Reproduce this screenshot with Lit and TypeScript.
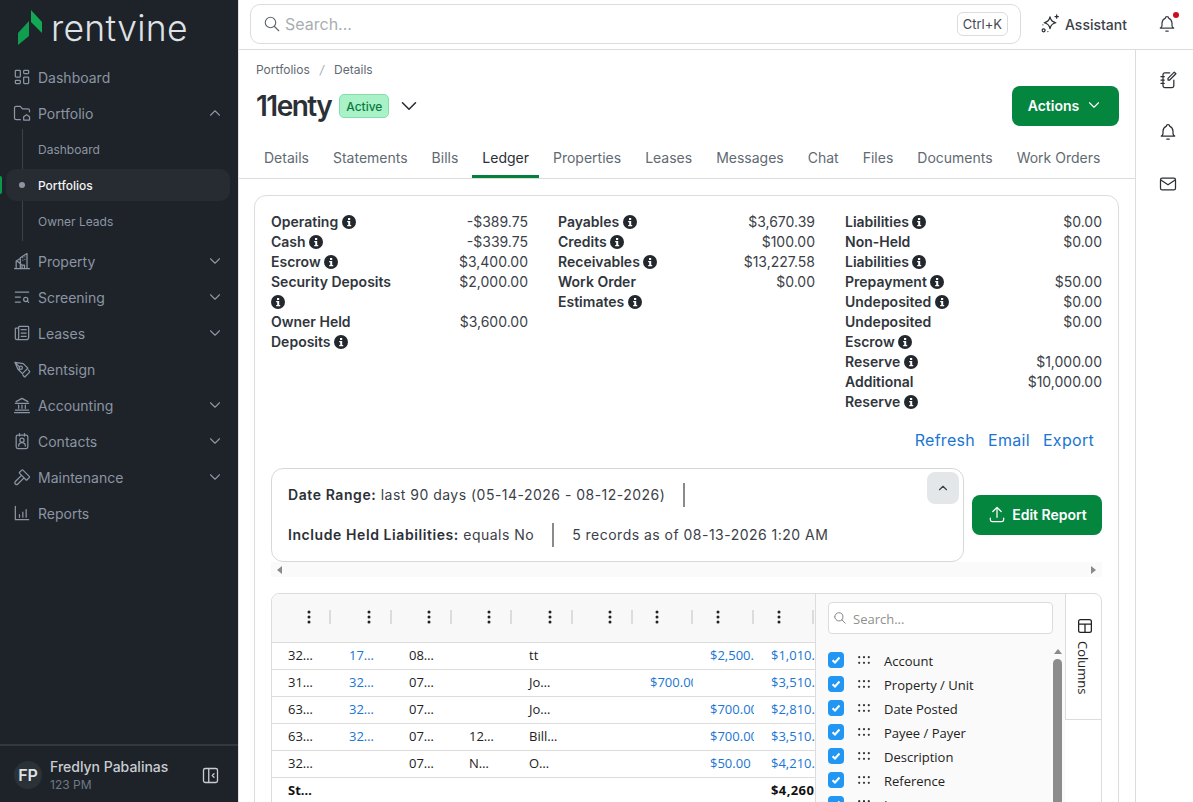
import { LitElement, html, css } from "lit";
import { customElement } from "lit/decorators.js";

const ICONS: Record<string, string> = {
  dashboard:
    "M5 4h4a1 1 0 0 1 1 1v6a1 1 0 0 1-1 1H5a1 1 0 0 1-1-1V5a1 1 0 0 1 1-1M5 16h4a1 1 0 0 1 1 1v2a1 1 0 0 1-1 1H5a1 1 0 0 1-1-1v-2a1 1 0 0 1 1-1M15 12h4a1 1 0 0 1 1 1v6a1 1 0 0 1-1 1h-4a1 1 0 0 1-1-1v-6a1 1 0 0 1 1-1M15 4h4a1 1 0 0 1 1 1v2a1 1 0 0 1-1 1h-4a1 1 0 0 1-1-1V5a1 1 0 0 1 1-1",
  portfolio:
    "M10 20H5a2 2 0 0 1-2-2V6a2 2 0 0 1 2-2h5l2.5 3H19a2 2 0 0 1 2 2v1.5M14 20.5v-4l3.5-2.5 3.5 2.5v4z",
  property:
    "M3 21h18M5 21v-9l5-3v12M10 8l8-5v18M13 8v.01M13 11v.01M15.5 7v.01M15.5 10v.01M6 12l5 4M12 21v-4h3v4",
  screening: "M4 6h16M4 12h6M4 18h6M14 15a2.5 2.5 0 1 0 5 0a2.5 2.5 0 1 0-5 0M18.5 17l1.5 1.5",
  leases:
    "M8 6H5a1 1 0 0 0-1 1v11a2 2 0 0 0 4 0V5a1 1 0 0 1 1-1h10a1 1 0 0 1 1 1v12a3 3 0 0 1-3 3H6M11 8h6M11 12h6M11 16h6",
  rentsign:
    "M3.500 4l10 1.500 5.500 5.500-6.500 6.500-5.500-5.500zM3.500 4l5.700 5.700M8.500 10.500a2 2 0 1 0 4 0a2 2 0 1 0-4 0M13 19l1.500 2a1 1 0 0 0 1.400 0l5-5a1 1 0 0 0 0-1.400l-1.500-1.500",
  accounting: "M3 21h18M4 18h16M4 10h16M5 8l7-4 7 4M8 12v4M12 12v4M16 12v4",
  contacts:
    "M7 5h10a2 2 0 0 1 2 2v12a2 2 0 0 1-2 2H7a2 2 0 0 1-2-2V7a2 2 0 0 1 2-2M9 3v3M15 3v3M9.500 11a2.500 2.500 0 1 0 5 0a2.500 2.500 0 1 0-5 0M8 18a4 4 0 0 1 8 0",
  maintenance:
    "M11.414 10l-7.383 7.418a2.091 2.091 0 0 0 0 2.967 2.11 2.11 0 0 0 2.976 0l7.407-7.385M18.121 15.293l2.586-2.586a1 1 0 0 0 0-1.414l-7.586-7.586a1 1 0 0 0-1.414 0L9.121 6.293a1 1 0 0 0 0 1.414l7.586 7.586a1 1 0 0 0 1.414 0z",
  reports: "M4 4v16h16M9 17v-3M13 17v-6M17 17V8",
  down: "M6 9l6 6 6-6",
  up: "M6 15l6-6 6 6",
  search: "M3 10a7 7 0 1 0 14 0a7 7 0 1 0-14 0M21 21l-6-6",
  bell: "M10 5a2 2 0 1 1 4 0 7 7 0 0 1 4 6v3a4 4 0 0 0 2 3H4a4 4 0 0 0 2-3v-3a7 7 0 0 1 4-6M10.500 20.500h3",
  mail: "M5 5h14a2 2 0 0 1 2 2v10a2 2 0 0 1-2 2H5a2 2 0 0 1-2-2V7a2 2 0 0 1 2-2M3 7l9 6 9-6",
  notes:
    "M14 3.500H8a2 2 0 0 0-2 2V19a2 2 0 0 0 2 2h9a2 2 0 0 0 2-2v-7M3.500 8h4M3.500 12h4M3.500 16h4M19.500 2.500l2 2-7.500 7.500h-2v-2z",
  sparkle:
    "M12 3.500c.7 4 2.500 6 7 7-4.500 1-6.300 3-7 7-.7-4-2.500-6-7-7 4.500-1 6.300-3 7-7zM20 1v4M18 3h4M2.500 19.500a1.800 1.800 0 1 0 3.600 0a1.800 1.800 0 1 0-3.600 0M9.500 21v.01M3.500 13v.01",
  upload: "M4 17v2a2 2 0 0 0 2 2h12a2 2 0 0 0 2-2v-2M7 9l5-5 5 5M12 4v12",
  collapse: "M6 4h12a2 2 0 0 1 2 2v12a2 2 0 0 1-2 2H6a2 2 0 0 1-2-2V6a2 2 0 0 1 2-2M10 4v16M16 10l-2 2 2 2",
  table: "M6 3.500h12a2.500 2.500 0 0 1 2.500 2.500v12a2.500 2.500 0 0 1-2.500 2.500H6A2.500 2.500 0 0 1 3.500 18V6A2.500 2.500 0 0 1 6 3.500M3.500 9.500h17M12 9.500v11",
};

const icon = (name: string) =>
  html`<svg class="i" viewBox="0 0 24 24"><path d=${ICONS[name]}></path></svg>`;

const info = html`<svg class="info" viewBox="0 0 14 14">
  <circle cx="7" cy="7" r="7"></circle>
  <rect x="6" y="3" width="2.200" height="2"></rect>
  <path d="M5.200 6h3v4h1v1.300H5.200V10h1V7.300h-1z"></path>
</svg>`;

const NAV_TOP = [
  { label: "Dashboard", icon: "dashboard" },
  { label: "Portfolio", icon: "portfolio", chevron: "up" },
];
const NAV_REST = [
  { label: "Property", icon: "property", chevron: "down" },
  { label: "Screening", icon: "screening", chevron: "down" },
  { label: "Leases", icon: "leases", chevron: "down" },
  { label: "Rentsign", icon: "rentsign" },
  { label: "Accounting", icon: "accounting", chevron: "down" },
  { label: "Contacts", icon: "contacts", chevron: "down" },
  { label: "Maintenance", icon: "maintenance", chevron: "down" },
  { label: "Reports", icon: "reports" },
];
const TABS = ["Details", "Statements", "Bills", "Ledger", "Properties", "Leases", "Messages", "Chat", "Files", "Documents", "Work Orders"];

const SUMMARY = [
  [
    ["Operating", "-$389.75"],
    ["Cash", "-$339.75"],
    ["Escrow", "$3,400.00"],
    ["Security Deposits", "$2,000.00"],
    ["Owner Held Deposits", "$3,600.00"],
  ],
  [
    ["Payables", "$3,670.39"],
    ["Credits", "$100.00"],
    ["Receivables", "$13,227.58"],
    ["Work Order Estimates", "$0.00"],
  ],
  [
    ["Liabilities", "$0.00"],
    ["Non-Held Liabilities", "$0.00"],
    ["Prepayment", "$50.00"],
    ["Undeposited", "$0.00"],
    ["Undeposited Escrow", "$0.00"],
    ["Reserve", "$1,000.00"],
    ["Additional Reserve", "$10,000.00"],
  ],
];

// account, property, date, ref, description, -, charge, payment, balance
const ROWS = [
  ["32…", "17…", "08…", "", "tt", "", "", "$2,500.00", "$1,010.00"],
  ["31…", "32…", "07…", "", "Jo…", "", "$700.00", "", "$3,510.00"],
  ["63…", "32…", "07…", "", "Jo…", "", "", "$700.00", "$2,810.00"],
  ["63…", "32…", "07…", "12…", "Bill…", "", "", "$700.00", "$3,510.00"],
  ["32…", "", "07…", "N…", "O…", "", "", "$50.00", "$4,210.00"],
];
const COLUMNS = ["Account", "Property / Unit", "Date Posted", "Payee / Payer", "Description", "Reference", "Lease"];

@customElement("app-root")
export class AppRoot extends LitElement {
  static styles = css`
    :host {
      display: flex;
      height: 100vh;
      overflow: hidden;
      background: #fff;
      color: #2b3036;
      font-family: Inter, "Liberation Sans", sans-serif;
      font-size: 14px;
    }
    .i {
      width: 20px;
      height: 20px;
      flex: none;
      fill: none;
      stroke: currentColor;
      stroke-width: 1.5;
      stroke-linecap: round;
      stroke-linejoin: round;
    }
    .info {
      width: 14px;
      height: 14px;
      vertical-align: -2px;
      fill: #23282e;
    }
    .info rect,
    .info path {
      fill: #fff;
    }

    /* sidebar */
    .side {
      width: 238px;
      flex: none;
      background: #1e2329;
      color: #8b95a3;
      display: flex;
      flex-direction: column;
      border-right: 1px solid #e2e2e2;
    }
    .logo {
      height: 59px;
      flex: none;
      display: flex;
      align-items: flex-start;
      padding: 10px 0 0 18px;
      box-sizing: border-box;
      gap: 8px;
    }
    .logo svg {
      width: 25px;
      height: 36px;
      flex: none;
    }
    .logo span {
      color: #dfe2e5;
      font-size: 35.500px;
      font-weight: 300;
      line-height: 38px;
      letter-spacing: 0.3px;
    }
    .item {
      height: 36px;
      display: flex;
      align-items: center;
      gap: 6px;
      padding: 0 14px 0 12px;
    }
    .item .label {
      flex: 1;
    }
    .item .chev {
      width: 18px;
      height: 18px;
    }
    .sub {
      position: relative;
      margin-bottom: 4px;
      font-size: 12px;
    }
    .sub::before {
      content: "";
      position: absolute;
      left: 22px;
      top: -2px;
      bottom: -2px;
      width: 1px;
      background: #3c4248;
    }
    .sub div {
      height: 36px;
      display: flex;
      align-items: center;
      padding-left: 38px;
      position: relative;
    }
    .sub .active {
      color: #f2f4f5;
      font-weight: 500;
    }
    .sub .active::before {
      content: "";
      position: absolute;
      left: 6px;
      right: 8px;
      top: 2px;
      bottom: 2px;
      background: #272c32;
      border-radius: 10px;
    }
    .sub .active span {
      position: relative;
    }
    .sub .active::after {
      content: "";
      position: absolute;
      left: 19px;
      top: 15px;
      width: 6px;
      height: 6px;
      border-radius: 50%;
      background: #8b95a3;
    }
    .sub .bar {
      position: absolute;
      left: 0;
      top: 45px;
      width: 2px;
      height: 18px;
      padding: 0;
      background: #0b9a4a;
      border-radius: 0 2px 2px 0;
    }
    .foot {
      margin-top: auto;
      height: 58px;
      box-sizing: border-box;
      border-top: 2px solid #33383e;
      display: flex;
      align-items: center;
      gap: 8px;
      padding: 2px 17px 0 14px;
    }
    .avatar {
      width: 28px;
      height: 28px;
      border-radius: 50%;
      background: #2a3238;
      color: #dfe2e5;
      font-size: 16px;
      font-weight: 600;
      display: flex;
      align-items: center;
      justify-content: center;
    }
    .who {
      flex: 1;
      line-height: 18px;
      margin-top: 1px;
    }
    .who b {
      display: block;
      color: #c9cdd2;
      font-size: 14px;
      font-weight: 500;
    }
    .who small {
      display: block;
      color: #6f7985;
      font-size: 12px;
    }
    .foot .i {
      width: 21px;
      height: 21px;
      color: #c9cdd2;
    }

    /* top bar */
    .right {
      flex: 1;
      min-width: 0;
      display: flex;
      flex-direction: column;
    }
    .top {
      height: 50px;
      box-sizing: border-box;
      flex: none;
      border-bottom: 1px solid #dcdcdc;
      display: flex;
      align-items: center;
      padding: 0 0 1px 11px;
    }
    .search {
      width: 771px;
      height: 40px;
      box-sizing: border-box;
      border: 1px solid #dcdcdc;
      border-radius: 10px;
      display: flex;
      align-items: center;
      gap: 4px;
      padding: 0 12px;
      color: #a9adb2;
      font-size: 16px;
    }
    .search .i {
      width: 18px;
      height: 18px;
      color: #5d646b;
    }
    .search span {
      flex: 1;
    }
    .search kbd {
      font-family: inherit;
      font-size: 13px;
      color: #444b52;
      border: 1px solid #dcdcdc;
      border-radius: 6px;
      height: 24px;
      box-sizing: border-box;
      padding: 0 5px;
      display: flex;
      align-items: center;
    }
    .assist {
      display: flex;
      align-items: center;
      gap: 5px;
      margin-left: 19px;
      color: #3b4148;
      font-weight: 500;
    }
    .assist .i {
      color: #2b3036;
    }
    .bell {
      position: relative;
      margin-left: 30px;
      width: 20px;
      height: 20px;
      color: #3b4148;
    }
    .bell::after {
      content: "";
      position: absolute;
      right: -2px;
      top: -2px;
      width: 6px;
      height: 6px;
      border-radius: 50%;
      background: #c8101e;
    }

    .below {
      flex: 1;
      min-height: 0;
      display: flex;
    }
    .content {
      flex: 1;
      min-width: 0;
      overflow: hidden;
    }
    .rail {
      width: 58px;
      flex: none;
      box-sizing: border-box;
      border-left: 1px solid #dcdcdc;
      display: flex;
      flex-direction: column;
      align-items: center;
      gap: 32px;
      padding: 20px 0 0 7px;
      color: #2b3036;
    }

    /* page header */
    .head {
      padding: 12px 16px 0 17px;
    }
    .crumbs {
      font-size: 12px;
      line-height: 16px;
      color: #5f6a72;
      display: flex;
      gap: 10px;
    }
    .crumbs i {
      color: #a3a8ad;
    }
    .title {
      margin-top: 8px;
      display: flex;
      align-items: center;
      height: 40px;
    }
    .title h1 {
      margin: 0;
      font-size: 28px;
      font-weight: 600;
      letter-spacing: -1.500px;
      color: #2b3036;
    }
    .badge {
      margin-left: 8px;
      height: 24px;
      width: 50px;
      box-sizing: border-box;
      background: #a9f2c8;
      border: 1px solid #84dfaa;
      border-radius: 5px;
      color: #0b7a3e;
      font-size: 12px;
      font-weight: 500;
      display: flex;
      align-items: center;
      justify-content: center;
    }
    .caret {
      width: 26px;
      height: 26px;
      margin-left: 7px;
      color: #2b3036;
    }
    .caret .i {
      width: 26px;
      height: 26px;
    }
    .btn {
      background: #05863f;
      color: #fff;
      height: 40px;
      box-sizing: border-box;
      padding-bottom: 2px;
      border-radius: 8px;
      font-weight: 600;
      display: flex;
      align-items: center;
      justify-content: center;
    }
    .actions {
      margin-left: auto;
      width: 107px;
      gap: 6px;
    }
    .actions .i {
      width: 18px;
      height: 18px;
    }
    .tabs {
      margin-top: 13px;
      height: 40px;
      box-sizing: border-box;
      border-bottom: 1px solid #dcdcdc;
      display: flex;
      gap: 4px;
      padding-left: 15px;
      color: #5f6a72;
    }
    .tabs div {
      padding: 0 10px;
      line-height: 38px;
      height: 39px;
      box-sizing: border-box;
    }
    .tabs .on {
      color: #2b3036;
      border-bottom: 3px solid #05803c;
    }

    /* card */
    .card {
      margin: 16px 16px 0 15px;
      border: 1px solid #dcdcdc;
      border-radius: 12px;
      padding: 16px;
    }
    .summary {
      display: grid;
      grid-template-columns: repeat(3, 257px);
      gap: 30px;
      line-height: 20px;
    }
    .pair {
      display: grid;
      grid-template-columns: 1fr 1fr;
    }
    .pair b {
      font-weight: 600;
      color: #30363c;
      padding-right: 4px;
    }
    .pair span {
      text-align: right;
      color: #3b4148;
    }
    .links {
      margin-top: 16px;
      height: 24px;
      display: flex;
      justify-content: flex-end;
      gap: 13px;
      padding-right: 8px;
      font-size: 16px;
      line-height: 24px;
      color: #1976d2;
      letter-spacing: 0.3px;
    }
    .filter-row {
      margin-top: 16px;
      display: flex;
      align-items: center;
      gap: 8px;
    }
    .filter {
      position: relative;
      width: 693px;
      height: 94px;
      box-sizing: border-box;
      border: 1px solid #d8d8d8;
      border-radius: 12px;
      padding: 14px 16px;
      display: flex;
      flex-direction: column;
      gap: 16px;
      letter-spacing: 0.48px;
      color: #3b4148;
    }
    .filter > div:not(.toggle) {
      height: 24px;
      display: flex;
      align-items: center;
      gap: 18px;
    }
    .filter span {
      margin-top: -2px;
    }
    .filter b {
      font-weight: 600;
      color: #2b3036;
      letter-spacing: 0.58px;
    }
    .sep {
      width: 2px;
      height: 24px;
      background: #8a8a8a;
    }
    .toggle {
      position: absolute;
      top: 3px;
      right: 4px;
      width: 32px;
      height: 32px;
      background: #e4e7e9;
      border-radius: 8px;
      display: flex;
      align-items: center;
      justify-content: center;
    }
    .toggle .i {
      width: 14px;
      height: 14px;
      stroke-width: 2;
    }
    .edit {
      width: 130px;
      gap: 5px;
    }
    .hscroll {
      height: 15px;
      background: #fafafa;
      display: flex;
      align-items: center;
      justify-content: space-between;
      padding: 0 6px;
    }
    .tri-l,
    .tri-r {
      width: 0;
      height: 0;
      border-top: 4px solid transparent;
      border-bottom: 4px solid transparent;
    }
    .tri-l {
      border-right: 5px solid #8a8a8a;
    }
    .tri-r {
      border-left: 5px solid #8a8a8a;
    }

    /* grid */
    .grid {
      margin-top: 16px;
      height: 300px;
      border: 1px solid #dcdcdc;
      border-radius: 8px 8px 0 0;
      display: flex;
      overflow: hidden;
      font-family: "Open Sans", "Liberation Sans", sans-serif;
      font-size: 13px;
      color: #222;
    }
    .table {
      width: 543px;
      flex: none;
      overflow: hidden;
    }
    .hrow,
    .row {
      display: grid;
      grid-template-columns: 59px 61px 60px 60px 61px 60px 60px 61px 61px;
    }
    .hrow {
      height: 49px;
      background: #f8f8f8;
      border-bottom: 1px solid #dcdcdc;
      box-sizing: border-box;
    }
    .hcell {
      position: relative;
      display: flex;
      align-items: flex-start;
      justify-content: flex-end;
      padding: 16px 21px 0 0;
    }
    .hcell:first-child {
      padding-right: 20px;
    }
    .hcell.mid {
      padding-right: 34px;
    }
    .hcell::after {
      content: "";
      position: absolute;
      right: 0;
      top: 16px;
      width: 2px;
      height: 14px;
      background: #dcdcdc;
    }
    .hcell:last-child::after {
      right: 1px;
    }
    .hcell svg {
      width: 4px;
      height: 14px;
      fill: #222;
    }
    .row {
      height: 27px;
      box-sizing: border-box;
      border-bottom: 1px solid #dcdcdc;
      line-height: 25px;
    }
    .row div {
      overflow: hidden;
      white-space: nowrap;
      padding-left: 17px;
    }
    .row div:first-child {
      padding-left: 16px;
    }
    .row div:nth-child(2) {
      padding-left: 18px;
    }
    .row .link {
      color: #1976d2;
    }
    .row.total {
      font-weight: 700;
      border: 0;
      color: #111;
    }
    .row.total div:last-child {
      letter-spacing: 0.4px;
    }
    .panel {
      width: 250px;
      flex: none;
      border-left: 1px solid #dcdcdc;
      background: #fafafa;
      padding: 8px 0 0 12px;
      overflow: hidden;
      box-sizing: border-box;
    }
    .find {
      width: 225px;
      height: 32px;
      box-sizing: border-box;
      background: #fff;
      border: 1px solid #dcdcdc;
      border-radius: 4px;
      display: flex;
      align-items: center;
      gap: 6px;
      padding-left: 4px;
      color: #8f8f8f;
    }
    .find span {
      margin-top: 2px;
    }
    .find .i {
      width: 14px;
      height: 14px;
      color: #777;
    }
    .list-wrap {
      display: flex;
      margin-top: 15px;
    }
    .list {
      width: 225px;
      flex: none;
    }
    .col {
      height: 24px;
      display: flex;
      align-items: center;
    }
    .check {
      width: 16px;
      height: 16px;
      margin-top: -2px;
      border-radius: 4px;
      background: #2196f3;
      display: flex;
      align-items: center;
      justify-content: center;
    }
    .check svg {
      width: 10px;
      height: 10px;
      fill: none;
      stroke: #fff;
      stroke-width: 2;
    }
    .drag {
      width: 12px;
      height: 8px;
      margin: -2px 14px 0;
      fill: #333;
    }
    .vscroll {
      width: 9px;
      display: flex;
      flex-direction: column;
      align-items: center;
    }
    .tri-u {
      width: 0;
      height: 0;
      margin: 0 0 5px;
      border-left: 4px solid transparent;
      border-right: 4px solid transparent;
      border-bottom: 5px solid #8a8a8a;
    }
    .thumb {
      width: 9px;
      height: 160px;
      border-radius: 5px;
      background: #8c8c8c;
    }
    .coltab {
      flex: 1;
      height: 126px;
      box-sizing: border-box;
      border-left: 1px solid #dcdcdc;
      border-bottom: 1px solid #dcdcdc;
      display: flex;
      flex-direction: column;
      align-items: center;
      padding-top: 23px;
      gap: 6px;
    }
    .coltab .i {
      width: 18px;
      height: 18px;
      stroke-width: 1.700;
      margin-left: 2px;
    }
    .coltab span {
      writing-mode: vertical-rl;
      line-height: 16px;
      margin-right: 1px;
    }
  `;

  render() {
    return html`
      ${this.renderSidebar()}
      <div class="right">
        <div class="top">
          <div class="search">
            ${icon("search")}<span>Search...</span><kbd>Ctrl+K</kbd>
          </div>
          <div class="assist">${icon("sparkle")}Assistant</div>
          <div class="bell">${icon("bell")}</div>
        </div>
        <div class="below">
          <div class="content">
            ${this.renderHead()}
            <div class="card">
              <div class="summary">
                ${SUMMARY.map(
                  (col) => html`<div>
                    ${col.map(
                      ([k, v]) => html`<div class="pair">
                        <b>${k} ${info}</b><span>${v}</span>
                      </div>`
                    )}
                  </div>`
                )}
              </div>
              <div class="links">
                <span>Refresh</span><span>Email</span><span>Export</span>
              </div>
              <div class="filter-row">
                <div class="filter">
                  <div>
                    <span><b>Date Range:</b> last 90 days (05-14-2026 - 08-12-2026)</span>
                    <i class="sep"></i>
                  </div>
                  <div>
                    <span><b>Include Held Liabilities:</b> equals No</span>
                    <i class="sep"></i>
                    <span>5 records as of 08-13-2026 1:20 AM</span>
                  </div>
                  <div class="toggle">${icon("up")}</div>
                </div>
                <div class="btn edit">${icon("upload")}Edit Report</div>
              </div>
              <div class="hscroll"><i class="tri-l"></i><i class="tri-r"></i></div>
              ${this.renderGrid()}
            </div>
          </div>
          <div class="rail">${icon("notes")}${icon("bell")}${icon("mail")}</div>
        </div>
      </div>
    `;
  }

  renderSidebar() {
    const item = (n: { label: string; icon: string; chevron?: string }) => html`
      <div class="item">
        ${icon(n.icon)}<span class="label">${n.label}</span>
        ${n.chevron
          ? html`<svg class="i chev" viewBox="0 0 24 24"><path d=${ICONS[n.chevron]}></path></svg>`
          : ""}
      </div>
    `;
    return html`
      <div class="side">
        <div class="logo">
          <svg viewBox="0 0 25 36">
            <path d="M0 35V23l11-12v15z" fill="#0f9d4f"></path>
            <path d="M13 0l11 12v11L13 12z" fill="#12a854"></path>
          </svg>
          <span>rentvine</span>
        </div>
        ${NAV_TOP.map(item)}
        <div class="sub">
          <div>Dashboard</div>
          <div class="active"><span>Portfolios</span></div>
          <div>Owner Leads</div>
          <i class="bar"></i>
        </div>
        ${NAV_REST.map(item)}
        <div class="foot">
          <div class="avatar">FP</div>
          <div class="who"><b>Fredlyn Pabalinas</b><small>123 PM</small></div>
          ${icon("collapse")}
        </div>
      </div>
    `;
  }

  renderHead() {
    return html`
      <div class="head">
        <div class="crumbs"><span>Portfolios</span><i>/</i><span>Details</span></div>
        <div class="title">
          <h1>11enty</h1>
          <div class="badge">Active</div>
          <div class="caret">${icon("down")}</div>
          <div class="btn actions">Actions ${icon("down")}</div>
        </div>
      </div>
      <div class="tabs">
        ${TABS.map((t) => html`<div class=${t === "Ledger" ? "on" : ""}>${t}</div>`)}
      </div>
    `;
  }

  renderGrid() {
    const dots = html`<svg viewBox="0 0 4 14">
      <circle cx="2" cy="2" r="1.500"></circle>
      <circle cx="2" cy="7" r="1.500"></circle>
      <circle cx="2" cy="12" r="1.500"></circle>
    </svg>`;
    return html`
      <div class="grid">
        <div class="table">
          <div class="hrow">
            ${ROWS[0].map(
              (_, i) => html`<div class="hcell ${i >= 6 ? "mid" : ""}">${dots}</div>`
            )}
          </div>
          ${ROWS.map(
            (r) => html`<div class="row">
              ${r.map(
                (c, i) => html`<div class=${i === 1 || i >= 6 ? "link" : ""}>${c}</div>`
              )}
            </div>`
          )}
          <div class="row total">
            <div>St…</div>
            <div></div><div></div><div></div><div></div><div></div><div></div><div></div>
            <div>$4,260.00</div>
          </div>
        </div>
        <div class="panel">
          <div class="find">${icon("search")}<span>Search...</span></div>
          <div class="list-wrap">
            <div class="list">
              ${COLUMNS.map(
                (c) => html`<div class="col">
                  <span class="check"><svg viewBox="0 0 10 10"><path d="M1.500 5.200l2.500 2.300 4.500-5"></path></svg></span>
                  <svg class="drag" viewBox="0 0 12 8">
                    <circle cx="1.200" cy="1.200" r="1.100"></circle>
                    <circle cx="6" cy="1.200" r="1.100"></circle>
                    <circle cx="10.800" cy="1.200" r="1.100"></circle>
                    <circle cx="1.200" cy="6.800" r="1.100"></circle>
                    <circle cx="6" cy="6.800" r="1.100"></circle>
                    <circle cx="10.800" cy="6.800" r="1.100"></circle>
                  </svg>
                  <span>${c}</span>
                </div>`
              )}
            </div>
            <div class="vscroll"><i class="tri-u"></i><div class="thumb"></div></div>
          </div>
        </div>
        <div class="coltab">${icon("table")}<span>Columns</span></div>
      </div>
    `;
  }
}
